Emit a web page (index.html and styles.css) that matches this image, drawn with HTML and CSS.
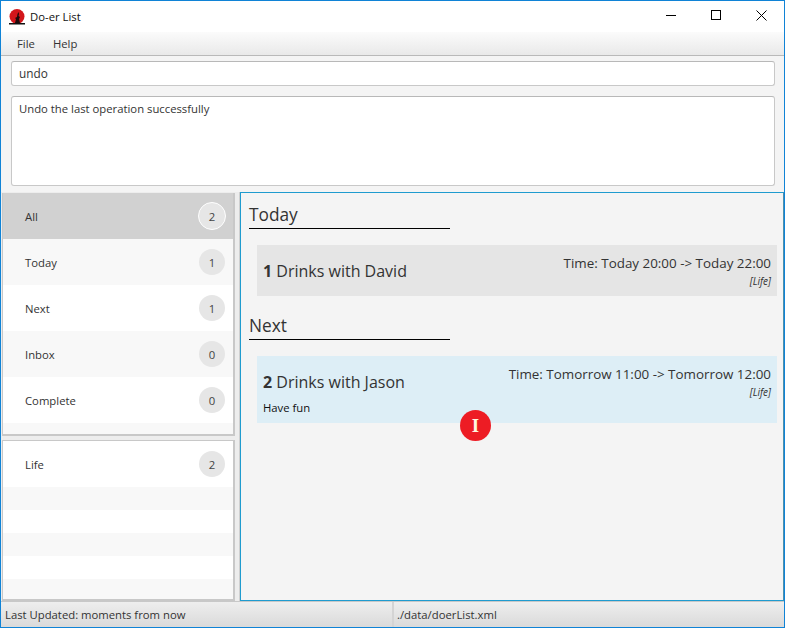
FILE: index.html
```html
<!DOCTYPE html>
<html lang="en">
<head>
  <meta charset="UTF-8">
  <title>Do-er List</title>
  <link rel="stylesheet" href="styles.css">
</head>
<body>
  <div class="window">
    <div class="titlebar">
      <svg class="logo" width="16" height="16" viewBox="0 0 16 16">
        <circle cx="8" cy="7.500" r="7.500" fill="#d3161b"/>
        <path d="M6 14l1-4-1-1 2-1 .5-3 1-2 .5 2-.5 2 1.500 1-1 2 1 4z" fill="#1c0a0a"/>
        <rect x="0" y="14" width="16" height="1.500" fill="#111"/>
      </svg>
      <span class="app-name">Do-er List</span>
      <div class="win-buttons">
        <svg width="10" height="10" viewBox="0 0 10 10"><path d="M0 5.500h10" stroke="#000" fill="none"/></svg>
        <svg width="10" height="10" viewBox="0 0 10 10"><rect x=".5" y=".5" width="9" height="9" stroke="#000" fill="none"/></svg>
        <svg width="11" height="11" viewBox="0 0 11 11"><path d="M.5.500l10 10M10.500.500l-10 10" stroke="#000" fill="none"/></svg>
      </div>
    </div>

    <div class="menubar">
      <span>File</span>
      <span>Help</span>
    </div>

    <div class="command-area">
      <div class="command-box">undo</div>
      <div class="result-box">Undo the last operation successfully</div>
    </div>

    <div class="content">
      <div class="sidebar">
        <div class="list-panel panel-top">
          <div class="row selected"><span>All</span><span class="count">2</span></div>
          <div class="row alt"><span>Today</span><span class="count">1</span></div>
          <div class="row"><span>Next</span><span class="count">1</span></div>
          <div class="row alt"><span>Inbox</span><span class="count">0</span></div>
          <div class="row"><span>Complete</span><span class="count">0</span></div>
          <div class="filler alt grow"></div>
        </div>
        <div class="list-panel panel-bottom">
          <div class="row"><span>Life</span><span class="count">2</span></div>
          <div class="filler alt"></div>
          <div class="filler"></div>
          <div class="filler alt"></div>
          <div class="filler"></div>
          <div class="filler alt grow"></div>
        </div>
      </div>

      <div class="tasks">
        <h2 class="section-title">Today</h2>
        <div class="card">
          <div class="card-main">
            <div class="task-name"><b>1</b> Drinks with David</div>
          </div>
          <div class="card-side">
            <div class="task-time">Time: Today 20:00 -&gt; Today 22:00</div>
            <div class="task-tag">[Life]</div>
          </div>
        </div>

        <h2 class="section-title">Next</h2>
        <div class="card card-active">
          <div class="card-main">
            <div class="task-name"><b>2</b> Drinks with Jason</div>
            <div class="task-note">Have fun</div>
          </div>
          <div class="card-side">
            <div class="task-time">Time: Tomorrow 11:00 -&gt; Tomorrow 12:00</div>
            <div class="task-tag">[Life]</div>
          </div>
        </div>
      </div>
    </div>

    <div class="statusbar">
      <div class="status-left">Last Updated: moments from now</div>
      <div class="status-right">./data/doerList.xml</div>
    </div>

    <div class="cursor-mark">I</div>
  </div>
</body>
</html>
```

FILE: styles.css
```css
* {
  box-sizing: border-box;
}

html, body {
  margin: 0;
  padding: 0;
}

body {
  font-family: "Open Sans", "Noto Sans", sans-serif;
  font-size: 11.300px;
  color: #333;
  background: #fff;
}

.window {
  position: relative;
  width: 785px;
  height: 628px;
  border: 1px solid #1083d6;
  display: flex;
  flex-direction: column;
  background: #f4f4f4;
  overflow: hidden;
}

/* title bar */
.titlebar {
  height: 31px;
  flex: none;
  display: flex;
  align-items: center;
  background: #fff;
  padding-left: 8px;
  color: #111;
}

.logo {
  flex: none;
}

.app-name {
  margin-left: 5px;
}

.win-buttons {
  margin-left: auto;
  display: flex;
  align-items: center;
  gap: 35px;
  padding-right: 17px;
  padding-bottom: 3px;
}

.win-buttons svg {
  display: block;
}

/* menu */
.menubar {
  height: 24px;
  flex: none;
  display: flex;
  align-items: center;
  gap: 18px;
  padding-left: 16px;
  background: linear-gradient(#fbfbfb, #e9e9e9);
  border-bottom: 1px solid #b9b9b9;
}

/* command boxes */
.command-area {
  height: 136px;
  flex: none;
  padding: 5px 9px 0 10px;
  background: #f4f4f4;
}

.command-box,
.result-box {
  background: #fff;
  border: 1px solid #c8c8c8;
  border-top-color: #b8b8b8;
  border-radius: 3px;
  padding: 0 7px;
}

.command-box {
  height: 25px;
  line-height: 23px;
  font-size: 11.800px;
}

.result-box {
  height: 90px;
  margin-top: 10px;
  padding-top: 4px;
  line-height: 16px;
}

/* sidebar and tasks */
.content {
  flex: 1;
  min-height: 0;
  display: flex;
  background: #d4d4d4;
}

.sidebar {
  width: 239px;
  flex: none;
  display: flex;
  flex-direction: column;
  gap: 4px;
  padding: 1px 4px 0 1px;
  background: #ededed;
  border-right: 1px solid #d0d0d0;
}

.list-panel {
  display: flex;
  flex-direction: column;
  background: #fff;
  border-left: 1px solid #c8c8c8;
  border-right: 2px solid #c8c8c8;
}

.panel-top {
  height: 243px;
  border-bottom: 2px solid #c8c8c8;
}

.panel-bottom {
  flex: 1;
  border-top: 1px solid #c8c8c8;
  border-bottom: 2px solid #c8c8c8;
}

.row {
  height: 46px;
  flex: none;
  display: flex;
  align-items: center;
  justify-content: space-between;
  padding: 0 8px 0 22px;
  background: #fff;
  color: #333;
}

.row.selected {
  background: #d1d1d1;
}

.row.alt,
.filler.alt {
  background: #f8f8f8;
}

.filler {
  height: 23px;
  flex: none;
}

.filler.grow {
  flex: 1;
}

.count {
  width: 26px;
  height: 26px;
  border-radius: 50%;
  background: #e6e6e6;
  display: flex;
  align-items: center;
  justify-content: center;
  color: #444;
}

.selected .count {
  width: 28px;
  height: 28px;
  margin-right: -1px;
  border: 1px solid #fff;
}

.tasks {
  flex: 1;
  background: #f4f4f4;
  border: 1px solid #1f9bcf;
  border-right-color: #4c8fae;
  padding: 9px 6px 0 8px;
}

.section-title {
  width: 201px;
  margin: 0;
  height: 27px;
  font-size: 17.300px;
  font-weight: 400;
  line-height: 26px;
  color: #333;
  border-bottom: 1px solid #000;
}

.card {
  display: flex;
  justify-content: space-between;
  margin: 16px 0 17px 8px;
  padding: 0 6px 0 6px;
  background: #e5e5e5;
  height: 51px;
}

.card-active {
  background: #ddeef6;
  height: 67px;
}

.card-main {
  padding-top: 14px;
}

.task-name {
  font-size: 16px;
  line-height: 25px;
  color: #333;
}

.task-note {
  margin-top: 5px;
  font-size: 11.300px;
  line-height: 16px;
  color: #111;
}

.card-side {
  padding-top: 8px;
  text-align: right;
}

.task-time {
  font-size: 13.400px;
  line-height: 20px;
  color: #333;
}

.task-tag {
  margin-top: 1px;
  font-size: 10px;
  font-style: italic;
  line-height: 14px;
  color: #333;
}

/* status */
.statusbar {
  height: 26px;
  flex: none;
  display: flex;
  background: linear-gradient(#eeeeee, #dadada);
  border-top: 1px solid #c8c8c8;
}

.status-left {
  width: 393px;
  padding: 5px 0 0 4px;
  border-right: 2px solid #d4d4d4;
}

.status-right {
  padding: 5px 0 0 3px;
}

/* red marker over the list */
.cursor-mark {
  position: absolute;
  left: 459px;
  top: 409px;
  width: 31px;
  height: 31px;
  border-radius: 50%;
  background: #ed1c24;
  color: #fff6e0;
  font-family: "Liberation Serif", serif;
  font-size: 19px;
  font-weight: 700;
  line-height: 31px;
  text-align: center;
}
```
